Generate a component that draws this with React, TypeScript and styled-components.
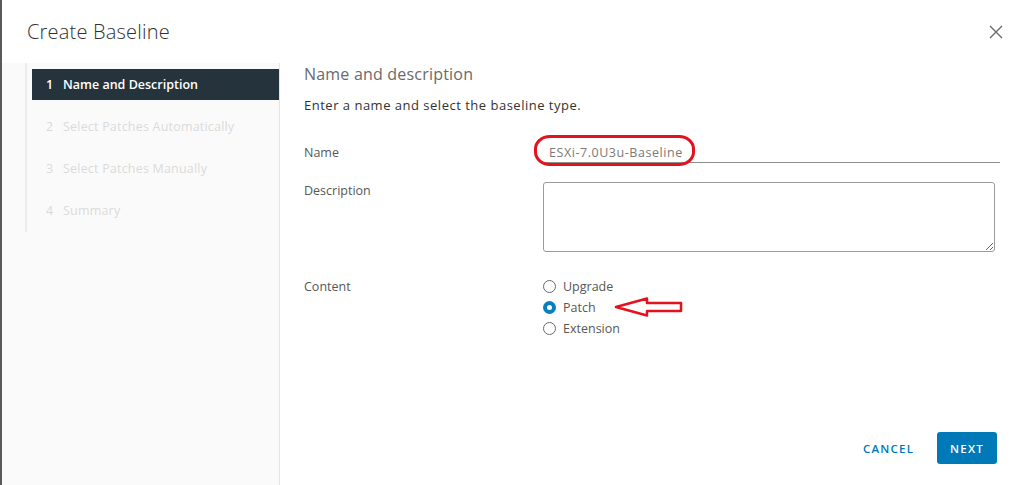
import React, { useState } from 'react';
import styled, { createGlobalStyle } from 'styled-components';

const GlobalStyle = createGlobalStyle`
  html, body {
    margin: 0;
    padding: 0;
    background: #fff;
  }
  body {
    font-family: 'Open Sans', 'Liberation Sans', sans-serif;
    color: #333;
  }
  * {
    box-sizing: border-box;
  }
`;

const Dialog = styled.div`
  width: 1024px;
  height: 485px;
  border-left: 2px solid #5a5a5a;
  display: flex;
  flex-direction: column;
  background: #fff;
  overflow: hidden;
`;

const Header = styled.div`
  height: 63px;
  flex-shrink: 0;
  display: flex;
  align-items: center;
  justify-content: space-between;
  padding: 0 16px 0 25px;
`;

const Title = styled.h2`
  margin: 0;
  font-size: 20px;
  font-weight: 300;
  color: #313131;
  letter-spacing: 0.2px;
`;

const CloseButton = styled.button`
  width: 24px;
  height: 24px;
  padding: 0;
  border: none;
  background: none;
  display: flex;
  align-items: center;
  justify-content: center;
  cursor: pointer;
`;

const Body = styled.div`
  flex: 1;
  display: flex;
  min-height: 0;
`;

const Sidebar = styled.div`
  width: 278px;
  flex-shrink: 0;
  background: #fafafa;
  border-right: 1px solid #e4e4e4;
  padding-left: 23px;
`;

const StepList = styled.ul`
  list-style: none;
  margin: 0;
  padding: 6px 0 6px 5px;
  border-left: 2px solid #ececec;
  display: flex;
  flex-direction: column;
  gap: 11px;
`;

const Step = styled.li<{ $active?: boolean }>`
  height: 31px;
  display: flex;
  align-items: center;
  padding-left: 14px;
  font-size: 12.5px;
  font-weight: ${(p) => (p.$active ? 600 : 400)};
  letter-spacing: ${(p) => (p.$active ? '0' : '0.2px')};
  color: ${(p) => (p.$active ? '#fff' : '#dadada')};
  background: ${(p) => (p.$active ? '#25333d' : 'transparent')};
`;

const StepNum = styled.span`
  width: 17px;
`;

const Main = styled.div`
  flex: 1;
  min-width: 0;
  display: flex;
  flex-direction: column;
  padding: 0 24px 21px 24px;
`;

const SectionTitle = styled.h3`
  margin: 1px 0 0;
  height: 21px;
  line-height: 21px;
  font-size: 16px;
  font-weight: 400;
  color: #6a6a6a;
  letter-spacing: 0.2px;
`;

const Intro = styled.p`
  margin: 11px 0 0;
  font-size: 13px;
  line-height: 18px;
  letter-spacing: 0.5px;
  color: #333;
`;

const FormRow = styled.div<{ $top: number }>`
  display: grid;
  grid-template-columns: 239px 1fr;
  align-items: start;
  margin-top: ${(p) => p.$top}px;
`;

const Label = styled.label<{ $lh?: number }>`
  font-size: 12.5px;
  line-height: ${(p) => p.$lh ?? 18}px;
  color: #575757;
`;

const InputWrap = styled.div`
  position: relative;
  height: 21px;
`;

const TextInput = styled.input`
  display: block;
  width: 100%;
  height: 21px;
  border: none;
  border-bottom: 1px solid #8c8c8c;
  padding: 0 6px;
  font-family: inherit;
  font-size: 12.5px;
  letter-spacing: 0.55px;
  color: #7a7a7a;
  background: transparent;
  outline: none;
`;

const Highlight = styled.span`
  position: absolute;
  left: -9px;
  top: -7px;
  width: 161px;
  height: 31px;
  border: 3px solid #e3121d;
  border-radius: 16px / 14px;
  pointer-events: none;
`;

const TextArea = styled.textarea`
  display: block;
  width: 452px;
  height: 70px;
  border: 1px solid #9a9a9a;
  border-radius: 3px;
  font-family: inherit;
  font-size: 12px;
  resize: vertical;
  margin: 0;
`;

const RadioGroup = styled.div`
  display: flex;
  flex-direction: column;
  gap: 3px;
  margin-top: -1px;
`;

const RadioRow = styled.label`
  display: flex;
  align-items: center;
  height: 18px;
  font-size: 12.5px;
  color: #575757;
  cursor: pointer;
`;

const RadioDot = styled.span<{ $checked: boolean }>`
  width: 13px;
  height: 13px;
  border-radius: 50%;
  margin-right: 7px;
  border: ${(p) => (p.$checked ? '4px solid #0a7fc0' : '1px solid #6a6a6a')};
  background: #fff;
`;

const Arrow = styled.svg`
  margin-left: 18px;
`;

const Footer = styled.div`
  margin-top: auto;
  display: flex;
  justify-content: flex-end;
  align-items: center;
  gap: 11px;
  padding-right: 3px;
`;

const Button = styled.button<{ $primary?: boolean }>`
  height: 32px;
  padding: 0 ${(p) => (p.$primary ? '13px' : '12px')};
  border: none;
  border-radius: 3px;
  font-family: inherit;
  font-size: 11.5px;
  font-weight: 600;
  letter-spacing: 1.2px;
  color: ${(p) => (p.$primary ? '#fff' : '#0079b8')};
  background: ${(p) => (p.$primary ? '#0079b8' : 'transparent')};
  cursor: pointer;
`;

const steps = [
  'Name and Description',
  'Select Patches Automatically',
  'Select Patches Manually',
  'Summary',
];

const options = ['Upgrade', 'Patch', 'Extension'];

export default function App() {
  const [content, setContent] = useState('Patch');

  return (
    <>
      <GlobalStyle />
      <Dialog>
        <Header>
          <Title>Create Baseline</Title>
          <CloseButton aria-label="Close">
            <svg width="14" height="14" viewBox="0 0 14 14">
              <path d="M1 1 L13 13 M13 1 L1 13" stroke="#6b6b6b" strokeWidth="1.4" />
            </svg>
          </CloseButton>
        </Header>
        <Body>
          <Sidebar>
            <StepList>
              {steps.map((s, i) => (
                <Step key={s} $active={i === 0}>
                  <StepNum>{i + 1}</StepNum>
                  {s}
                </Step>
              ))}
            </StepList>
          </Sidebar>
          <Main>
            <SectionTitle>Name and description</SectionTitle>
            <Intro>Enter a name and select the baseline type.</Intro>
            <FormRow $top={28}>
              <Label $lh={21}>Name</Label>
              <InputWrap>
                <TextInput defaultValue="ESXi-7.0U3u-Baseline" />
                <Highlight />
              </InputWrap>
            </FormRow>
            <FormRow $top={19}>
              <Label>Description</Label>
              <TextArea />
            </FormRow>
            <FormRow $top={26}>
              <Label>Content</Label>
              <RadioGroup>
                {options.map((o) => (
                  <RadioRow key={o} onClick={() => setContent(o)}>
                    <RadioDot $checked={content === o} />
                    {o}
                    {o === 'Patch' && (
                      <Arrow width="70" height="20" viewBox="0 0 70 20">
                        <path
                          d="M2 10 L33 1.5 L33 6 L67 6 L67 14 L33 14 L33 18.5 Z"
                          fill="none"
                          stroke="#e3121d"
                          strokeWidth="2.5"
                          strokeLinejoin="round"
                        />
                      </Arrow>
                    )}
                  </RadioRow>
                ))}
              </RadioGroup>
            </FormRow>
            <Footer>
              <Button>CANCEL</Button>
              <Button $primary>NEXT</Button>
            </Footer>
          </Main>
        </Body>
      </Dialog>
    </>
  );
}
